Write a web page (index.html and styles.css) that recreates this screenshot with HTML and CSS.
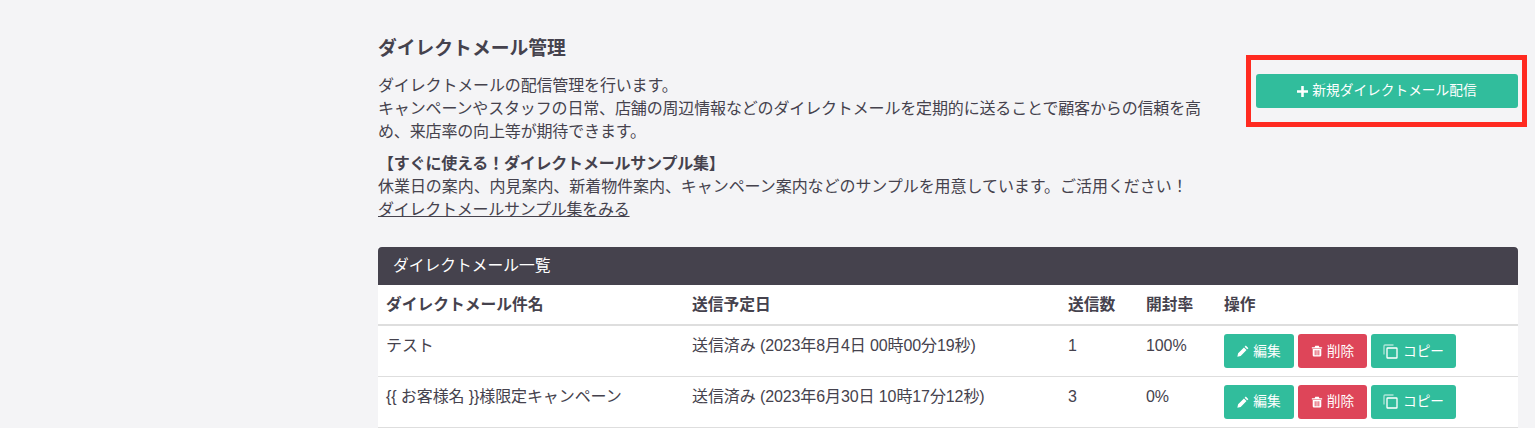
FILE: index.html
```html
<!DOCTYPE html>
<html lang="ja">
<head>
  <meta charset="UTF-8">
  <meta name="viewport" content="width=device-width, initial-scale=1.0">
  <title>ダイレクトメール管理</title>
  <link rel="stylesheet" href="styles.css">
</head>
<body>
  <main class="main">
    <div class="page-head">
      <div class="intro">
        <h1>ダイレクトメール管理</h1>
        <p class="lead">ダイレクトメールの配信管理を行います。<br>キャンペーンやスタッフの日常、店舗の周辺情報などのダイレクトメールを定期的に送ることで顧客からの信頼を高め、来店率の向上等が期待できます。</p>
        <p class="sample"><strong>【すぐに使える！ダイレクトメールサンプル集】</strong><br>休業日の案内、内見案内、新着物件案内、キャンペーン案内などのサンプルを用意しています。ご活用ください！<br><a href="#">ダイレクトメールサンプル集をみる</a></p>
      </div>
      <div class="head-action">
        <a class="btn btn-new" href="#">
          <svg class="icon icon-plus" viewBox="0 0 12 12"><path d="M4.600 0h2.800v4.600H12v2.800H7.400V12H4.600V7.400H0V4.600h4.600z"/></svg>
          新規ダイレクトメール配信
        </a>
        <span class="highlight"></span>
      </div>
    </div>

    <section class="panel">
      <h2 class="panel-title">ダイレクトメール一覧</h2>
      <table class="list">
        <thead>
          <tr>
            <th class="col-name">ダイレクトメール件名</th>
            <th class="col-date">送信予定日</th>
            <th class="col-num">送信数</th>
            <th class="col-num">開封率</th>
            <th>操作</th>
          </tr>
        </thead>
        <tbody>
          <tr>
            <td>テスト</td>
            <td>送信済み (2023年8月4日 00時00分19秒)</td>
            <td>1</td>
            <td>100%</td>
            <td>
              <div class="actions">
                <a class="btn btn-edit" href="#"><svg class="icon" viewBox="0 0 14 14"><path d="M10.300.7 13.300 3.700 11.900 5.100 8.900 2.100zM8.100 2.900 11.100 5.900 4.300 12.700.4 13.600 1.300 9.700z"/></svg>編集</a>
                <a class="btn btn-delete" href="#"><svg class="icon" viewBox="0 0 14 14"><path fill-rule="evenodd" d="M5 .8h4l.8 1.700H13v1.500H1V2.500h3.200zM2 4.800h10V12a1.500 1.500 0 0 1-1.500 1.500h-7A1.500 1.500 0 0 1 2 12zM4.300 6v6h1.100V6zM6.450 6v6h1.100V6zM8.600 6v6h1.100V6z"/></svg>削除</a>
                <a class="btn btn-copy" href="#"><svg class="icon icon-copy" viewBox="0 0 15 15"><path class="back" d="M10.500 1H2a1 1 0 0 0-1 1v8.500"/><rect x="4" y="4" width="10" height="10" rx=".6"/></svg>コピー</a>
              </div>
            </td>
          </tr>
          <tr>
            <td>{{ お客様名 }}様限定キャンペーン</td>
            <td>送信済み (2023年6月30日 10時17分12秒)</td>
            <td>3</td>
            <td>0%</td>
            <td>
              <div class="actions">
                <a class="btn btn-edit" href="#"><svg class="icon" viewBox="0 0 14 14"><path d="M10.300.7 13.300 3.700 11.900 5.100 8.900 2.100zM8.100 2.900 11.100 5.900 4.300 12.700.4 13.600 1.300 9.700z"/></svg>編集</a>
                <a class="btn btn-delete" href="#"><svg class="icon" viewBox="0 0 14 14"><path fill-rule="evenodd" d="M5 .8h4l.8 1.700H13v1.500H1V2.500h3.200zM2 4.800h10V12a1.500 1.500 0 0 1-1.500 1.500h-7A1.500 1.500 0 0 1 2 12zM4.300 6v6h1.100V6zM6.450 6v6h1.100V6zM8.600 6v6h1.100V6z"/></svg>削除</a>
                <a class="btn btn-copy" href="#"><svg class="icon icon-copy" viewBox="0 0 15 15"><path class="back" d="M10.500 1H2a1 1 0 0 0-1 1v8.500"/><rect x="4" y="4" width="10" height="10" rx=".6"/></svg>コピー</a>
              </div>
            </td>
          </tr>
        </tbody>
      </table>
    </section>
  </main>
</body>
</html>
```

FILE: styles.css
```css
* {
  margin: 0;
  padding: 0;
  box-sizing: border-box;
}
html, body {
  height: 428px;
  overflow: hidden;
}
body {
  background: #f4f4f6;
  color: #45424d;
  font-family: "Liberation Sans", "Noto Sans CJK JP", sans-serif;
  font-size: 16px;
  line-height: 23.2px;
}
a {
  color: inherit;
}
.main {
  padding: 38px 17px 0 378px;
}

/* page head */
.page-head {
  display: flex;
  justify-content: space-between;
}
.intro {
  width: 830px;
}
.intro h1 {
  font-size: 18.8px;
  line-height: 22px;
  font-weight: 700;
  margin-bottom: 14px;
}
.lead {
  margin-bottom: 8px;
  letter-spacing: -0.15px;
}
.sample {
  letter-spacing: -0.06px;
}
.sample strong {
  letter-spacing: -0.2px;
}
.sample a {
  letter-spacing: -0.25px;
}
.head-action {
  position: relative;
  width: 262px;
  padding-top: 36px;
}
.highlight {
  position: absolute;
  left: -10px;
  top: 17px;
  width: 281px;
  height: 72px;
  border: 5px solid #ff2a20;
}

/* buttons */
.btn {
  display: flex;
  align-items: center;
  justify-content: center;
  height: 34px;
  border-radius: 3px;
  color: #fff;
  font-size: 13.7px;
  letter-spacing: 0;
  text-decoration: none;
  white-space: nowrap;
}
.btn-new, .btn-edit, .btn-copy {
  background: #31bd9c;
}
.btn-delete {
  background: #de4559;
}
.btn-edit {
  width: 70px;
}
.btn-delete {
  width: 69px;
}
.btn-copy {
  width: 85px;
}
.icon {
  width: 12px;
  height: 12px;
  margin-right: 4px;
  fill: #fff;
  flex: none;
}
.icon-plus {
  width: 11px;
  height: 11px;
}
.icon-copy {
  width: 15px;
  height: 15px;
  margin-right: 5px;
  fill: none;
  stroke: #fff;
  stroke-width: 1.3;
}
.icon-copy .back {
  opacity: 0.6;
}

/* list */
.panel {
  margin-top: 26px;
  background: #fff;
}
.panel-title {
  height: 38px;
  padding-left: 15px;
  background: #45424d;
  border-radius: 4px 4px 0 0;
  color: #fff;
  font-size: 15.75px;
  font-weight: 400;
  line-height: 37px;
}
.list {
  width: 100%;
  border-collapse: collapse;
  table-layout: fixed;
}
.list th {
  height: 40px;
  padding: 0 8px;
  text-align: left;
  font-size: 15.75px;
  font-weight: 700;
  border-bottom: 2px solid #dedede;
}
.list td {
  height: 51px;
  padding: 8px 8px 0;
  vertical-align: top;
  letter-spacing: -0.1px;
  border-bottom: 1px solid #dedede;
}
.col-name {
  width: 306px;
}
.col-date {
  width: 376px;
}
.col-num {
  width: 78px;
}
.actions {
  display: flex;
  gap: 4px;
}
```
